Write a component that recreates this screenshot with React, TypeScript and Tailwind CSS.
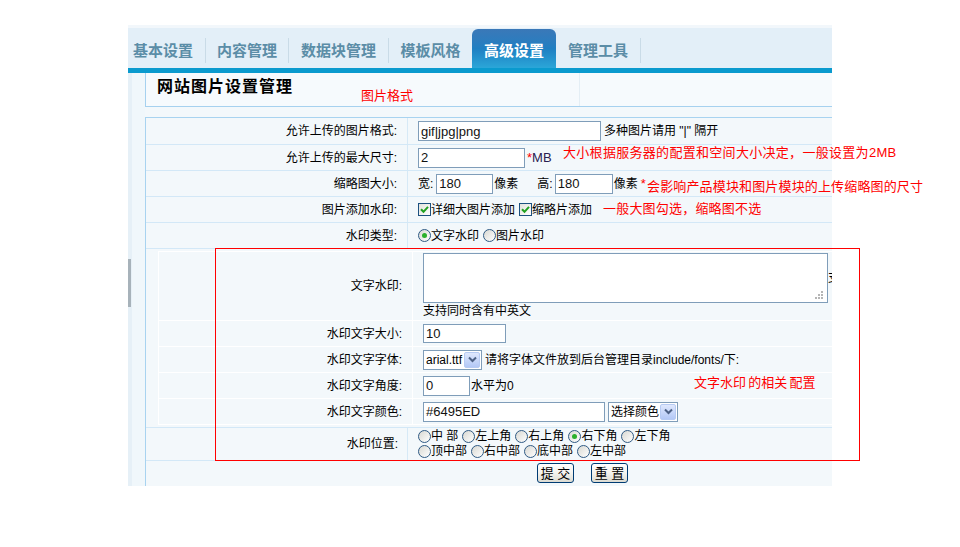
import React from "react";

type RowProps = { h: string; label: string; labelPad?: string; children?: React.ReactNode };

function Row({ h, label, labelPad = "pr-[10px]", children }: RowProps) {
  return (
    <div className={`flex shrink-0 border-b border-[#d3e8f7] ${h}`}>
      <div className={`w-[262px] shrink-0 border-r border-[#d6e9f6] flex items-center justify-end ${labelPad}`}>
        {label}
      </div>
      <div className="flex-1 flex items-center pl-[10px] whitespace-nowrap">{children}</div>
    </div>
  );
}

function NRow({ h, label, children }: RowProps) {
  return (
    <div className={`flex shrink-0 border-b border-white ${h}`}>
      <div className="w-[254px] shrink-0 border-r border-white flex items-center justify-end pr-[10px]">
        {label}
      </div>
      <div className="flex-1 flex items-center pl-[10px] whitespace-nowrap">{children}</div>
    </div>
  );
}

function Field({ w, value, h = "h-[20px]" }: { w: string; value: string; h?: string }) {
  return (
    <div className={`${w} ${h} shrink-0 border border-[#7f9db9] bg-white flex items-center pl-[2px] text-[13px] leading-none text-[#111]`}>
      {value}
    </div>
  );
}

function Select({ w, text }: { w: string; text: string }) {
  return (
    <div className={`${w} h-[20px] shrink-0 border border-[#7f9db9] bg-white flex items-stretch`}>
      <span className="flex-1 flex items-center pl-[2px] text-[12px] leading-none whitespace-nowrap">{text}</span>
      <span className="w-[16px] shrink-0 m-[1px] rounded-[2px] border border-[#b7cbf3] bg-gradient-to-b from-[#dfe8fd] to-[#b3c8f6] flex items-center justify-center">
        <svg width="9" height="7" viewBox="0 0 9 7">
          <path d="M1 1.5 L4.5 5 L8 1.5" stroke="#4d6185" strokeWidth="2" fill="none" />
        </svg>
      </span>
    </div>
  );
}

function Check() {
  return (
    <span className="w-[13px] h-[13px] shrink-0 border border-[#1c5180] bg-gradient-to-br from-[#e2e2dc] to-white flex items-center justify-center">
      <svg width="9" height="9" viewBox="0 0 9 9">
        <path d="M1 4.2 L3.5 6.8 L8 1.8" stroke="#21a121" strokeWidth="2" fill="none" />
      </svg>
    </span>
  );
}

function Radio({ on }: { on?: boolean }) {
  return (
    <span className="w-[13px] h-[13px] shrink-0 rounded-full border border-[#2f5a84] bg-gradient-to-br from-[#d8d8d2] to-white flex items-center justify-center">
      {on && <span className="w-[5px] h-[5px] rounded-full bg-[#2bb02b]" />}
    </span>
  );
}

function Opt({ on, text }: { on?: boolean; text: string }) {
  return (
    <span className="flex items-center mr-[4px]">
      <Radio on={on} />
      <span className="whitespace-pre">{text}</span>
    </span>
  );
}

function Tab({ w, children, first }: { w: string; children: React.ReactNode; first?: boolean }) {
  return (
    <div className={`${w} h-full shrink-0 flex items-center pt-[4px] ${first ? "justify-start pl-[5px]" : "justify-center"}`}>
      {children}
    </div>
  );
}

function Sep() {
  return <div className="w-[1px] h-[25px] self-center shrink-0 bg-[#c9dbe7] mt-[4px]" />;
}

export default function App() {
  return (
    <div className="relative w-[960px] h-[547px] bg-white overflow-hidden pl-[128px] pt-[25px] [font-family:'Liberation_Sans','Noto_Sans_CJK_SC',sans-serif] text-[12px] text-black">
      <div className="w-[704px] h-[461px] overflow-hidden flex flex-col bg-[#f3f8fb]">
        {/* top navigation tabs */}
        <div className="h-[48px] shrink-0 flex flex-col">
          <div className="h-[3px] bg-[#f2f7fb]" />
          <div className="h-[40px] bg-[#e3eff8] flex items-stretch text-[15px] font-bold text-[#5b8da7] [font-family:'Noto_Sans_CJK_SC',sans-serif]">
            <Tab w="w-[77px]" first>基本设置</Tab>
            <Sep />
            <Tab w="w-[82px]">内容管理</Tab>
            <Sep />
            <Tab w="w-[99px]">数据块管理</Tab>
            <Sep />
            <Tab w="w-[83px]">模板风格</Tab>
            <div className="w-[84px] h-[39px] self-end shrink-0 rounded-t-[6px] bg-gradient-to-b from-[#3a78b8] via-[#1f7fc2] to-[#2ba6d8] text-white flex items-center justify-center pt-[4px]">
              高级设置
            </div>
            <Tab w="w-[84px]">管理工具</Tab>
            <Sep />
            <div className="flex-1" />
          </div>
          <div className="h-[5px] bg-[#0a9ace]" />
        </div>

        <div className="flex flex-1 min-h-0">
          {/* left gutter */}
          <div className="w-[17px] shrink-0 bg-[#f0f7fb] flex">
            <div className="w-[4px] bg-[#e6f0f7] flex flex-col">
              <div className="mt-[186px] w-[3px] h-[48px] bg-[#a7b2ba]" />
            </div>
          </div>

          <div className="flex-1 flex flex-col min-w-0">
            {/* page title */}
            <div className="h-[34px] shrink-0 flex border-l border-b border-[#a6d1ef] bg-[#f6fafd]">
              <div className="w-[434px] shrink-0 border-r border-[#e4eef5] pl-[11px] pt-[2px] text-[16px] font-bold tracking-[1px] leading-[20px] [font-family:'Noto_Sans_CJK_SC',sans-serif]">
                网站图片设置管理
              </div>
              <div className="flex-1" />
            </div>

            {/* settings form */}
            <div className="mt-[10px] border-l border-t border-[#a8d3f0] flex flex-col flex-1">
              <Row h="h-[27px]" label="允许上传的图片格式:">
                <Field w="w-[183px]" value="gif|jpg|png" />
                <span className="ml-[3px]">多种图片请用 {'"|"'} 隔开</span>
              </Row>
              <Row h="h-[26px]" label="允许上传的最大尺寸:">
                <Field w="w-[107px]" value="2" />
                <span className="ml-[2px] text-[13px] text-[#ff0000] self-start mt-[6px] leading-none">*</span>
                <span className="text-[13px] text-[#2a2050]">MB</span>
              </Row>
              <Row h="h-[26px]" label="缩略图大小:">
                <span>宽:</span>
                <span className="ml-[3px]"><Field w="w-[57px]" value="180" /></span>
                <span className="ml-[1px]">像素</span>
                <span className="ml-[19px]">高:</span>
                <span className="ml-[2px]"><Field w="w-[58px]" value="180" /></span>
                <span className="ml-[1px]">像素</span>
                <span className="ml-[3px] text-[13px] text-[#ff0000] self-start mt-[6px] leading-none">*</span>
              </Row>
              <Row h="h-[26px]" label="图片添加水印:">
                <Check />
                <span>详细大图片添加</span>
                <span className="ml-[4px]"><Check /></span>
                <span>缩略片添加</span>
              </Row>
              <Row h="h-[26px]" label="水印类型:">
                <Opt on text="文字水印" />
                <Opt text="图片水印" />
              </Row>

              {/* text watermark options */}
              <div className="h-[179px] shrink-0 border-b border-[#d3e8f7] pl-[12px] pt-[2px]">
                <div className="border-l border-t border-white flex flex-col">
                  <div className="flex shrink-0 border-b border-white h-[69px]">
                    <div className="w-[254px] shrink-0 border-r border-white flex items-center justify-end pr-[10px]">
                      文字水印:
                    </div>
                    <div className="flex-1 flex flex-col pl-[10px] pt-[1px] whitespace-nowrap">
                      <div className="flex items-center">
                        <div className="relative w-[405px] h-[50px] shrink-0 border border-[#7f9db9] bg-white">
                          <svg className="absolute right-[3px] bottom-[2px]" width="10" height="10" viewBox="0 0 10 10">
                            <rect x="7" y="1" width="2" height="2" fill="#b5b5b5" />
                            <rect x="4" y="4" width="2" height="2" fill="#b5b5b5" />
                            <rect x="7" y="4" width="2" height="2" fill="#b5b5b5" />
                            <rect x="1" y="7" width="2" height="2" fill="#b5b5b5" />
                            <rect x="4" y="7" width="2" height="2" fill="#b5b5b5" />
                            <rect x="7" y="7" width="2" height="2" fill="#b5b5b5" />
                          </svg>
                        </div>
                        <span>支</span>
                      </div>
                      <div className="leading-[15px] mt-[1px]">支持同时含有中英文</div>
                    </div>
                  </div>
                  <NRow h="h-[26px]" label="水印文字大小:">
                    <Field w="w-[83px]" h="h-[19px]" value="10" />
                  </NRow>
                  <NRow h="h-[26px]" label="水印文字字体:">
                    <Select w="w-[59px]" text="arial.ttf" />
                    <span className="ml-[3px]">请将字体文件放到后台管理目录include/fonts/下:</span>
                  </NRow>
                  <NRow h="h-[26px]" label="水印文字角度:">
                    <Field w="w-[47px]" value="0" />
                    <span className="ml-[1px]">水平为0</span>
                  </NRow>
                  <NRow h="h-[26px]" label="水印文字颜色:">
                    <Field w="w-[182px]" value="#6495ED" />
                    <span className="ml-[3px]">
                      <Select w="w-[70px]" text="选择颜色" />
                    </span>
                  </NRow>
                </div>
              </div>

              <Row h="h-[33px]" label="水印位置:" labelPad="pr-[9px]">
                <div className="flex flex-col leading-[15px]">
                  <div className="flex items-center">
                    <Opt text="中 部" />
                    <Opt text="左上角" />
                    <Opt text="右上角" />
                    <Opt on text="右下角" />
                    <Opt text="左下角" />
                  </div>
                  <div className="flex items-center">
                    <Opt text="顶中部" />
                    <Opt text="右中部" />
                    <Opt text="底中部" />
                    <Opt text="左中部" />
                  </div>
                </div>
              </Row>

              <div className="flex-1 flex items-start pt-[2px] pl-[391px] gap-[17px]">
                <button className="w-[37px] h-[20px] rounded-[3px] border border-[#003c74] bg-gradient-to-b from-white via-[#f4f3ee] to-[#dcdbd2] text-[13px] leading-none flex items-center justify-center">
                  提 交
                </button>
                <button className="w-[37px] h-[20px] rounded-[3px] border border-[#003c74] bg-gradient-to-b from-white via-[#f4f3ee] to-[#dcdbd2] text-[13px] leading-none flex items-center justify-center">
                  重 置
                </button>
              </div>
            </div>
          </div>
        </div>
      </div>

      {/* red annotations */}
      <div className="absolute left-[215px] top-[248px] w-[645px] h-[213px] border border-[#ff0000] pointer-events-none" />
      <div className="absolute left-[361px] top-[88px] text-[13px] leading-[16px] text-[#ff0000] whitespace-nowrap">图片格式</div>
      <div className="absolute left-[563px] top-[145px] text-[13px] leading-[16px] tracking-[0.3px] text-[#ff0000] whitespace-nowrap">
        大小根据服务器的配置和空间大小决定，一般设置为2MB
      </div>
      <div className="absolute left-[647px] top-[179px] text-[13px] leading-[16px] tracking-[0.15px] text-[#ff0000] whitespace-nowrap">
        会影响产品模块和图片模块的上传缩略图的尺寸
      </div>
      <div className="absolute left-[603px] top-[201px] text-[13px] leading-[16px] tracking-[0.2px] text-[#ff0000] whitespace-nowrap">
        一般大图勾选，缩略图不选
      </div>
      <div className="absolute left-[694px] top-[375px] text-[13px] leading-[16px] text-[#ff0000] whitespace-nowrap">
        文字水印<span className="text-[8px]"> </span>的相关<span className="text-[8px]"> </span>配置
      </div>
    </div>
  );
}
